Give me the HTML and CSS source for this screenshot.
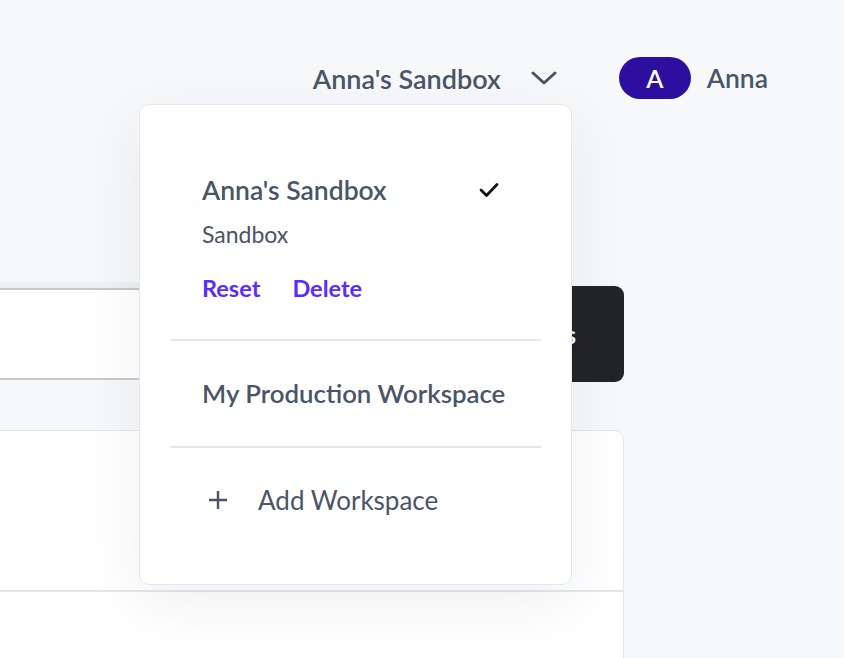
FILE: index.html
```html
<!DOCTYPE html>
<html lang="en">
<head>
<meta charset="utf-8">
<title>Workspaces</title>
<link rel="stylesheet" href="styles.css">
</head>
<body>
<div class="page">
  <header class="topbar">
    <div class="workspace-switch">
      <span class="workspace-name">Anna's Sandbox</span>
      <svg class="chevron" width="26" height="16" viewBox="0 0 26 16"><polyline points="2,3 13,13 24,3" fill="none" stroke="#4a5568" stroke-width="3" stroke-linecap="round" stroke-linejoin="round"/></svg>
    </div>
    <div class="user">
      <span class="avatar">A</span>
      <span class="user-name">Anna</span>
    </div>
  </header>

  <main class="main">
    <div class="search-row">
      <div class="search-input"></div>
      <button class="dark-btn">Invite Users</button>
    </div>
    <section class="card">
      <div class="card-head"></div>
      <div class="card-body"></div>
    </section>
  </main>

  <div class="dropdown">
    <div class="dd-section dd-current">
      <div class="dd-title-row">
        <span class="dd-title">Anna's Sandbox</span>
        <svg class="check" width="20" height="16" viewBox="0 0 20 16"><polyline points="2,8 7.5,13.5 18,2.5" fill="none" stroke="#111" stroke-width="2.8" stroke-linecap="round" stroke-linejoin="round"/></svg>
      </div>
      <div class="dd-sub">Sandbox</div>
      <div class="dd-actions">
        <a class="dd-link">Reset</a>
        <a class="dd-link">Delete</a>
      </div>
    </div>
    <div class="dd-section dd-other">
      <span class="dd-title dd-title-alt">My Production Workspace</span>
    </div>
    <div class="dd-section dd-add">
      <svg class="plus" width="20" height="20" viewBox="0 0 20 20"><path d="M10 1v18M1 10h18" stroke="#4a5568" stroke-width="2.4" fill="none"/></svg>
      <span class="dd-add-label">Add Workspace</span>
    </div>
  </div>
</div>
</body>
</html>
```

FILE: styles.css
```css
* { box-sizing: border-box; }
html, body { margin: 0; padding: 0; }
body {
  background: #f7f8fa;
  font-family: Lato, "Noto Sans", sans-serif;
  color: #4a5568;
  width: 844px;
  height: 658px;
  overflow: hidden;
}
.page { position: relative; height: 658px; }

.topbar {
  height: 156px;
  display: flex;
  justify-content: flex-end;
  align-items: center;
  padding-right: 76px;
}
.workspace-switch { display: flex; align-items: center; gap: 30px; margin-right: 62px; }
.workspace-name { font-size: 27px; font-weight: 600; }
.chevron { display: block; }
.user { display: flex; align-items: center; gap: 16px; }
.avatar {
  width: 72px; height: 42px; border-radius: 21px;
  background: #2d0f9f; color: #fff;
  display: flex; align-items: center; justify-content: center;
  font-size: 25px; font-weight: 600;
}
.user-name { font-size: 26.5px; font-weight: 600; }

.main {
  margin-left: -20px;
  width: 644px;
  padding-top: 130px;
  display: flex;
  flex-direction: column;
  gap: 48px;
}
.search-row { display: flex; align-items: center; }
.search-input {
  flex: 1;
  height: 92px;
  background: #fff;
  border-top: 2px solid #c6c7c9;
  border-bottom: 2px solid #c6c7c9;
  box-shadow: 0 -6px 0 #eef0f3;
}
.dark-btn {
  width: 220px;
  height: 96px;
  border: none;
  border-radius: 0 9px 9px 0;
  background: #232427;
  color: #fff;
  font-family: Lato, sans-serif;
  font-size: 24px;
  font-weight: 700;
  display: flex;
  align-items: center;
  justify-content: flex-end;
  padding: 0 48px 0 0;
  white-space: nowrap;
}
.card {
  background: #fff;
  border: 1px solid #e2e6ee;
  border-radius: 0 10px 0 0;
  height: 260px;
}
.card-head { height: 161px; border-bottom: 2px solid #e2e6ee; }

.dropdown {
  position: absolute;
  left: 139px;
  top: 104px;
  width: 433px;
  height: 481px;
  background: #fff;
  border: 1px solid #e6e7ea;
  border-radius: 10px;
  box-shadow: 0 18px 60px rgba(30, 40, 70, 0.07);
  padding: 0 30px;
  display: flex;
  flex-direction: column;
}
.dd-section { padding-left: 32px; }
.dd-current { padding-top: 70px; padding-bottom: 37px; border-bottom: 2px solid #e2e8f0; padding-right: 42px; }
.dd-title-row { display: flex; justify-content: space-between; align-items: center; height: 30px; }
.dd-title { font-size: 26.5px; font-weight: 600; line-height: 30px; color: #4a5568; }
.dd-title-alt { font-size: 25.8px; }
.check { display: block; }
.dd-sub { font-size: 23px; line-height: 28px; margin-top: 15px; color: #4a5568; }
.dd-actions { display: flex; gap: 32px; margin-top: 26px; height: 28px; align-items: center; }
.dd-link { font-size: 23.5px; font-weight: 700; color: #5b2cff; line-height: 28px; cursor: pointer; }
.dd-other { padding-top: 37px; padding-bottom: 38px; border-bottom: 2px solid #e2e8f0; }
.dd-add { padding-top: 37px; display: flex; align-items: center; gap: 30px; height: 67px; padding-left: 38px; }
.plus { display: block; }
.dd-add-label { font-size: 26px; line-height: 30px; color: #4a5568; }
```
